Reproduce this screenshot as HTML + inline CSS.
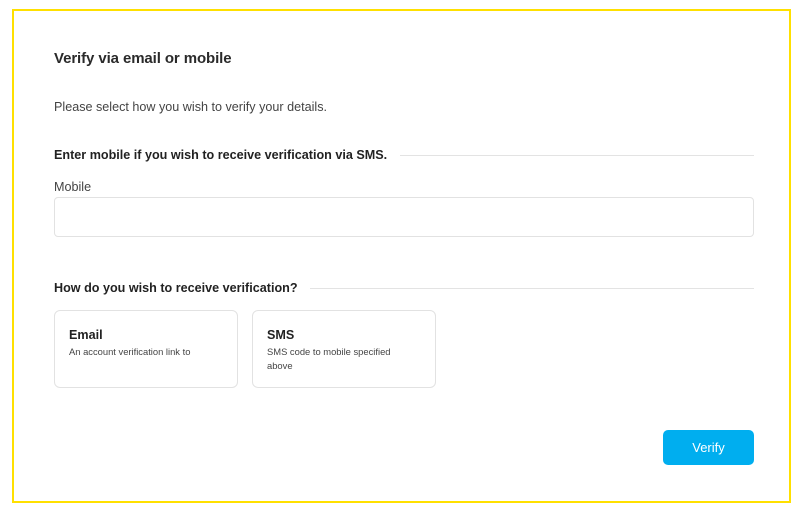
<!DOCTYPE html>
<html><head><style>
*{margin:0;padding:0;box-sizing:border-box}
body{width:800px;height:514px;background:#fff;font-family:"Liberation Sans",Arial,sans-serif;position:relative;overflow:hidden;color:#222}
.frame{position:absolute;left:12px;top:9px;width:779px;height:494px;border:2px solid #ffe000}
.a{position:absolute;white-space:nowrap}
.line{position:absolute;height:1px;background:#e3e3e3}
.box{position:absolute;border:1px solid #e2e2e2;border-radius:6px;background:#fff}
</style></head><body>
<div class="frame"></div>
<div class="a" style="left:54px;top:50px;font-size:15px;font-weight:bold;color:#2a2a2a;letter-spacing:-0.1px">Verify via email or mobile</div>
<div class="a" style="left:54px;top:100px;font-size:12.6px;color:#444">Please select how you wish to verify your details.</div>
<div class="a" style="left:54px;top:148px;font-size:12.6px;font-weight:bold;color:#222">Enter mobile if you wish to receive verification via SMS.</div>
<div class="line" style="left:400px;top:155px;width:354px"></div>
<div class="a" style="left:54px;top:180px;font-size:12.6px;color:#444">Mobile</div>
<div class="box" style="left:54px;top:197px;width:700px;height:40px;border-radius:4px"></div>
<div class="a" style="left:54px;top:281px;font-size:12.6px;font-weight:bold;color:#222">How do you wish to receive verification?</div>
<div class="line" style="left:310px;top:288px;width:444px"></div>
<div class="box" style="left:54px;top:310px;width:184px;height:78px"></div>
<div class="a" style="left:69px;top:328px;font-size:12.6px;font-weight:bold">Email</div>
<div class="a" style="left:69px;top:346px;font-size:9.4px;color:#444">An account verification link to</div>
<div class="box" style="left:252px;top:310px;width:184px;height:78px"></div>
<div class="a" style="left:267px;top:328px;font-size:12.6px;font-weight:bold">SMS</div>
<div class="a" style="left:267px;top:345px;font-size:9.4px;color:#444;line-height:14px">SMS code to mobile specified<br>above</div>
<div style="position:absolute;left:663px;top:430px;width:91px;height:35px;background:#00aeef;border-radius:5px;color:#fff;font-size:13px;text-align:center;line-height:35px">Verify</div>
</body></html>
